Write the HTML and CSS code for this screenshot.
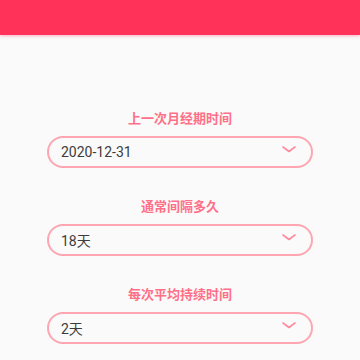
FILE: index.html
```html
<!DOCTYPE html>
<html lang="zh">
<head>
    <meta charset="UTF-8">
    <meta name="viewport" content="width=device-width, initial-scale=1.0">
    <title>经期设置</title>
    <link rel="stylesheet" href="styles.css">
</head>
<body>

<header class="top-bar"></header>

<section class="form">
    <!-- 上一次月经 -->
    <div class="field">
        <div class="field-label">上一次月经期时间</div>
        <div class="select">
            <span class="select-value">2020-12-31</span>
            <svg class="arrow" width="14" height="7" viewBox="0 0 14 7"><path d="M1 1 L7 5.5 L13 1" fill="none" stroke="#ff8a9c" stroke-width="1.6" stroke-linecap="round" stroke-linejoin="round"/></svg>
        </div>
    </div>

    <!-- 间隔 -->
    <div class="field">
        <div class="field-label">通常间隔多久</div>
        <div class="select">
            <span class="select-value">18天</span>
            <svg class="arrow" width="14" height="7" viewBox="0 0 14 7"><path d="M1 1 L7 5.5 L13 1" fill="none" stroke="#ff8a9c" stroke-width="1.6" stroke-linecap="round" stroke-linejoin="round"/></svg>
        </div>
    </div>

    <!-- 持续时间 -->
    <div class="field">
        <div class="field-label">每次平均持续时间</div>
        <div class="select">
            <span class="select-value">2天</span>
            <svg class="arrow" width="14" height="7" viewBox="0 0 14 7"><path d="M1 1 L7 5.5 L13 1" fill="none" stroke="#ff8a9c" stroke-width="1.6" stroke-linecap="round" stroke-linejoin="round"/></svg>
        </div>
    </div>
</section>

</body>
</html>
```

FILE: styles.css
```css
/* General Styles */
body {
    font-family: Roboto, "Noto Sans CJK SC", sans-serif;
    margin: 0;
    padding: 0;
    background-color: #fafafa;
}
.top-bar {
    height: 35px;
    background-color: #ff3259;
    box-shadow: 0 1px 3px rgba(255, 50, 89, 0.35);
}
.form {
    padding: 74px 47px 0;
}
.field {
    display: flex;
    flex-direction: column;
    margin-bottom: 29px;
}
.field-label {
    font-family: "Noto Sans CJK SC", sans-serif;
    font-size: 13px;
    font-weight: bold;
    line-height: 18px;
    color: #ff7088;
    text-align: center;
    margin-bottom: 9px;
}
.select {
    display: flex;
    justify-content: space-between;
    align-items: center;
    height: 32px;
    box-sizing: border-box;
    border: 2px solid #ffa6b2;
    border-radius: 16px;
    padding: 0 15px 0 12px;
}
.select-value {
    font-family: Roboto, "Noto Sans CJK SC", sans-serif;
    font-size: 14px;
    color: #3c3c3c;
}
.arrow {
    display: block;
    margin-top: -5px;
}
```
